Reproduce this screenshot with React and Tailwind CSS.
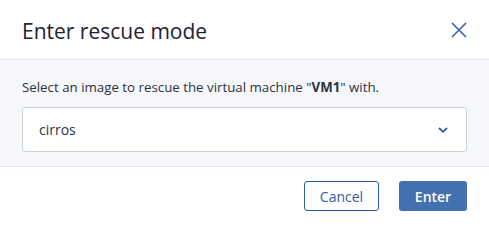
import React from "react";

const App = () => {
  return (
    <div
      className="w-[489px] h-[228px] bg-white flex flex-col text-[#2c3340]"
      style={{ fontFamily: '"Open Sans", sans-serif' }}
    >
      <div className="h-[60px] flex items-center justify-between pl-[22px] pr-[22px] border-b border-[#e4e7ec] shrink-0">
        <span className="text-[21px] text-[#1e2230] leading-none pt-[3px]">Enter rescue mode</span>
        <button className="w-[16px] h-[16px] flex items-center justify-center text-[#2e5fb0] mt-[1px]">
          <svg width="16" height="16" viewBox="0 0 16 16" fill="none">
            <path d="M1 1L15 15M15 1L1 15" stroke="currentColor" strokeWidth="1.5" />
          </svg>
        </button>
      </div>
      <div className="h-[107px] bg-[#f5f7fa] border-b border-[#e4e7ec] px-[22px] pt-[18px] shrink-0">
        <p className="text-[13.3px] leading-[18px] text-[#2c3340]">
          Select an image to rescue the virtual machine "<span className="font-bold">VM1</span>" with.
        </p>
        <div className="mt-[11px] h-[45px] bg-white border border-[#c9d1dd] rounded-[3px] flex items-center justify-between pl-[16px] pr-[18px]">
          <span className="text-[14px] text-[#2c3340]">cirros</span>
          <svg width="10" height="6" viewBox="0 0 10 6" fill="none" className="text-[#2e5fb0]">
            <path d="M1 1L5 4.8L9 1" stroke="currentColor" strokeWidth="1.8" />
          </svg>
        </div>
      </div>
      <div className="flex-1 flex items-center justify-end gap-[20px] pr-[22px] pb-[3px]">
        <button className="w-[75px] h-[30px] border border-[#2e5da8] rounded-[3px] text-[14px] text-[#2e5da8] bg-white">
          Cancel
        </button>
        <button className="w-[68px] h-[30px] rounded-[3px] text-[14px] font-semibold text-white bg-[#4270b0]">
          Enter
        </button>
      </div>
    </div>
  );
};

export default App;
